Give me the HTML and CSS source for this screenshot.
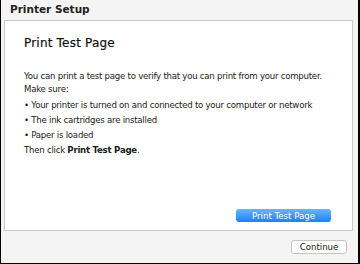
FILE: index.html
```html
<!DOCTYPE html>
<html lang="en">
<head>
  <meta charset="UTF-8">
  <meta name="viewport" content="width=device-width, initial-scale=1.0">
  <title>Printer Setup</title>
  <link rel="stylesheet" href="styles.css">
</head>
<body>
  <div class="window">
    <div class="titlebar">Printer Setup</div>
    <div class="panel">
      <h1>Print Test Page</h1>
      <p class="intro">You can print a test page to verify that you can print from your computer.<br>Make sure:</p>
      <p class="item first">&bull; Your printer is turned on and connected to your computer or network</p>
      <p class="item">&bull; The ink cartridges are installed</p>
      <p class="item">&bull; Paper is loaded</p>
      <p class="item">Then click <b>Print Test Page</b>.</p>
      <div class="actions">
        <button class="primary">Print Test Page</button>
      </div>
    </div>
    <div class="footer">
      <button class="secondary">Continue</button>
    </div>
  </div>
</body>
</html>
```

FILE: styles.css
```css
html, body {
  margin: 0;
  padding: 0;
}

body {
  font-family: "DejaVu Sans", sans-serif;
  color: #1a1a1a;
}

.window {
  width: 357px;
  height: 263px;
  background-color: #f4f4f4;
  border-left: 1px solid #000;
  border-right: 2px solid #000;
  border-bottom: 1px solid #000;
  display: flex;
  flex-direction: column;
}

.titlebar {
  height: 20px;
  line-height: 18px;
  padding-left: 9px;
  font-size: 10.5px;
  font-weight: bold;
  color: #222;
}

.panel {
  height: 209px;
  margin: 0 5px 0 3px;
  background-color: #fff;
  border: 1px solid #c8c8c8;
  padding: 0 19px;
  display: flex;
  flex-direction: column;
}

h1 {
  margin: 14px 0 0;
  font-size: 12px;
  font-weight: normal;
  line-height: 16px;
  letter-spacing: 0.2px;
  color: #111;
  -webkit-text-stroke: 0.2px #111;
}

p {
  margin: 0;
  font-size: 8.6px;
  line-height: 13px;
  letter-spacing: -0.25px;
  white-space: nowrap;
}

.intro {
  margin-top: 19px;
}

.item {
  margin-top: 2px;
}

.item.first {
  margin-top: 3px;
}

.actions {
  margin-top: auto;
  margin-bottom: 8px;
  display: flex;
  justify-content: flex-end;
  padding-right: 2px;
}

button {
  font-family: "DejaVu Sans", sans-serif;
  font-size: 8.6px;
  padding: 0;
  cursor: pointer;
}

.primary {
  width: 95px;
  height: 13px;
  border: none;
  border-radius: 3px;
  color: #fff;
  background: linear-gradient(#6cb3fa, #1a82fb);
}

.footer {
  flex: 1;
  display: flex;
  justify-content: flex-end;
  align-items: center;
  padding-right: 11px;
}

.secondary {
  width: 56px;
  height: 14px;
  border: 1px solid #c4c4c4;
  border-radius: 3px;
  background-color: #fff;
  color: #222;
}
```
